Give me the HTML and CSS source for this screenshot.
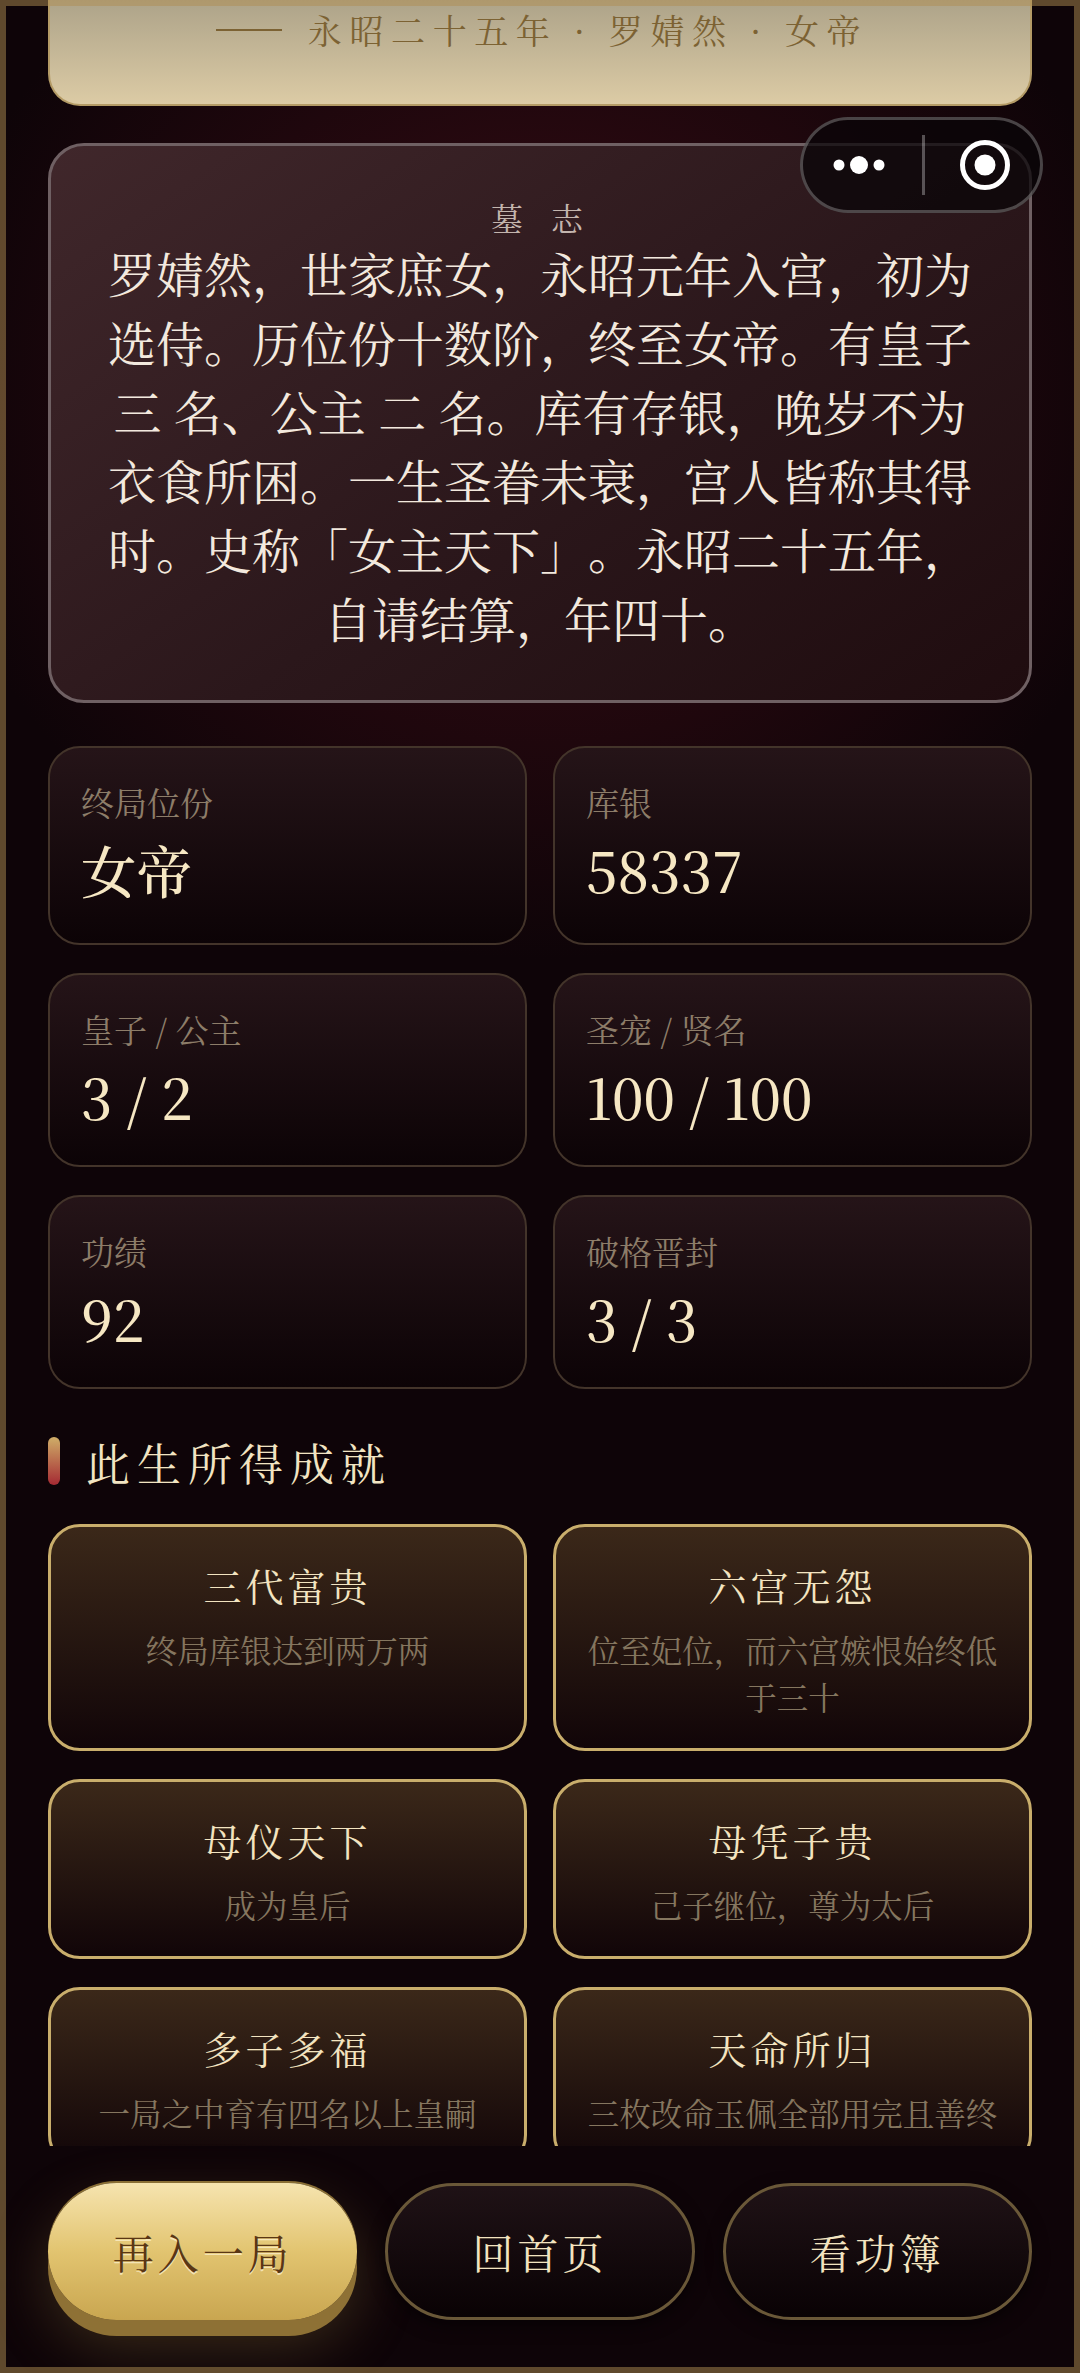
FILE: index.html
```html
<!DOCTYPE html>
<html lang="zh-CN">
<head>
    <meta charset="UTF-8">
    <meta name="viewport" content="width=device-width, initial-scale=1.0">
    <title>终局</title>
    <link rel="stylesheet" href="styles.css">
</head>
<body>
    <div class="frame">
        <div class="scroll">
            <div class="verdict">
                <p class="verdict-line"><span class="verdict-dash"></span>永昭二十五年 · 罗婧然 · 女帝</p>
            </div>

            <section class="epitaph">
                <h2 class="epitaph-title">墓志</h2>
                <p class="epitaph-text">罗婧然，世家庶女，永昭元年入宫，初为选侍。历位份十数阶，终至女帝。有皇子 三 名、公主 二 名。库有存银，晚岁不为衣食所困。一生圣眷未衰，宫人皆称其得时。史称「女主天下」。永昭二十五年，自请结算，年四十。</p>
            </section>

            <section class="stats">
                <div class="stat stat-tall">
                    <div class="stat-label">终局位份</div>
                    <div class="stat-value">女帝</div>
                </div>
                <div class="stat stat-tall">
                    <div class="stat-label">库银</div>
                    <div class="stat-value">58337</div>
                </div>
                <div class="stat">
                    <div class="stat-label">皇子 / 公主</div>
                    <div class="stat-value">3 / 2</div>
                </div>
                <div class="stat">
                    <div class="stat-label">圣宠 / 贤名</div>
                    <div class="stat-value">100 / 100</div>
                </div>
                <div class="stat">
                    <div class="stat-label">功绩</div>
                    <div class="stat-value">92</div>
                </div>
                <div class="stat">
                    <div class="stat-label">破格晋封</div>
                    <div class="stat-value">3 / 3</div>
                </div>
            </section>

            <h3 class="section-title"><span class="section-mark"></span>此生所得成就</h3>

            <section class="achievements">
                <div class="achievement">
                    <div class="achievement-name">三代富贵</div>
                    <div class="achievement-desc">终局库银达到两万两</div>
                </div>
                <div class="achievement">
                    <div class="achievement-name">六宫无怨</div>
                    <div class="achievement-desc">位至妃位，而六宫嫉恨始终低于三十</div>
                </div>
                <div class="achievement">
                    <div class="achievement-name">母仪天下</div>
                    <div class="achievement-desc">成为皇后</div>
                </div>
                <div class="achievement">
                    <div class="achievement-name">母凭子贵</div>
                    <div class="achievement-desc">己子继位，尊为太后</div>
                </div>
                <div class="achievement">
                    <div class="achievement-name">多子多福</div>
                    <div class="achievement-desc">一局之中育有四名以上皇嗣</div>
                </div>
                <div class="achievement">
                    <div class="achievement-name">天命所归</div>
                    <div class="achievement-desc">三枚改命玉佩全部用完且善终</div>
                </div>
            </section>
        </div>

        <div class="actions">
            <button class="btn btn-primary">再入一局</button>
            <button class="btn">回首页</button>
            <button class="btn">看功簿</button>
        </div>

        <div class="capsule">
            <svg class="capsule-dots" width="70" height="24" viewBox="0 0 70 24">
                <circle cx="10" cy="12" r="5.5" fill="#fff"/>
                <circle cx="30" cy="12" r="9" fill="#fff"/>
                <circle cx="50" cy="12" r="5.5" fill="#fff"/>
            </svg>
            <span class="capsule-line"></span>
            <svg class="capsule-ring" width="50" height="50" viewBox="0 0 50 50">
                <circle cx="25" cy="25" r="22.5" fill="none" stroke="#fff" stroke-width="5"/>
                <circle cx="25" cy="25" r="10.5" fill="#fff"/>
            </svg>
        </div>
    </div>
</body>
</html>
```

FILE: styles.css
```css
* {
    box-sizing: border-box;
}
html, body {
    margin: 0;
    padding: 0;
    height: 100%;
    background: #0e0408;
}
.frame {
    position: relative;
    display: flex;
    flex-direction: column;
    width: 1080px;
    height: 2373px;
    overflow: hidden;
    padding: 0 6px 6px;
    background:
        radial-gradient(ellipse 620px 560px at 50% 400px, #3a0c15 0%, rgba(58, 12, 21, 0) 100%),
        #0e0408;
    font-family: "Noto Serif CJK SC", "Liberation Serif", serif;
    color: #f4e6c4;
    text-spacing-trim: space-all;
}
/* gold edge lies over everything, so the top card shows through it */
.frame::after {
    content: "";
    position: absolute;
    inset: 0;
    border: 6px solid rgba(176, 142, 82, 0.5);
    pointer-events: none;
}
.scroll {
    height: 2146px;
    overflow: hidden;
    padding: 0 42px;
    flex: none;
}

/* top card, mostly scrolled away */
.verdict {
    height: 106px;
    padding: 8px 0 0 4px;
    border: 2px solid #b49b66;
    border-top: none;
    border-radius: 0 0 32px 32px;
    background: linear-gradient(180deg, #ada389 0%, #dccba5 100%);
    text-align: center;
}
.verdict-line {
    margin: 0;
    font-size: 34px;
    line-height: 44px;
    letter-spacing: 7.6px;
    color: #7c6233;
    display: flex;
    align-items: center;
    justify-content: center;
}
.verdict-dash {
    width: 66px;
    height: 2px;
    margin-right: 26px;
    background: #7c6233;
}

.epitaph {
    margin-top: 37px;
    height: 560px;
    padding: 50px 48px 0;
    border: 3px solid #6f6063;
    border-radius: 36px;
    background: linear-gradient(145deg, #40272b 0%, #2b171b 55%, #1f0c0f 100%);
    text-align: center;
}
.epitaph-title {
    margin: 0;
    font-size: 32px;
    font-weight: normal;
    line-height: 42px;
    letter-spacing: 28px;
    text-indent: 22px;
    color: #c4b5ae;
}
.epitaph-text {
    margin: 0;
    font-size: 48px;
    line-height: 69px;
    color: #f3e9de;
}

.stats {
    margin-top: 43px;
    display: grid;
    grid-template-columns: 479px 479px;
    column-gap: 26px;
    row-gap: 28px;
}
.stat {
    height: 194px;
    padding: 32px 31px 0;
    border: 2px solid #43342a;
    border-radius: 32px;
    background: linear-gradient(180deg, #251418 0%, #0c0306 100%);
}
.stat-tall {
    height: 199px;
}
.stat-label {
    font-size: 33px;
    line-height: 44px;
    color: #8d7d69;
}
.stat-value {
    margin-top: 10px;
    font-size: 55.5px;
    font-weight: 500;
    line-height: 70px;
    color: #f6e7c3;
}

.section-title {
    margin: 43px 0 0;
    display: flex;
    align-items: center;
    font-size: 44px;
    font-weight: normal;
    line-height: 60px;
    letter-spacing: 7px;
    color: #f2e4c2;
}
.section-mark {
    width: 12px;
    height: 48px;
    margin: 0 26px 2px 0;
    border-radius: 6px;
    background: linear-gradient(180deg, #cfae68 0%, #a52a33 100%);
}

.achievements {
    margin-top: 32px;
    display: grid;
    grid-template-columns: 479px 479px;
    column-gap: 26px;
    row-gap: 28px;
}
.achievement {
    padding: 32px 24px 28px;
    border: 3px solid #c9ae6c;
    border-radius: 32px;
    background: linear-gradient(180deg, #3b2819 0%, #110508 100%);
    text-align: center;
}
.achievement-name {
    font-size: 38px;
    line-height: 52px;
    letter-spacing: 4px;
    color: #f3e4c0;
}
.achievement-desc {
    margin-top: 15px;
    font-size: 31.5px;
    line-height: 47px;
    color: #85765f;
}

.actions {
    flex: 1;
    display: grid;
    grid-template-columns: repeat(3, 1fr);
    gap: 28px;
    padding: 37px 42px 0;
}
.btn {
    height: 137px;
    border: 3px solid #6a5838;
    border-radius: 69px;
    background: linear-gradient(180deg, #1f1216 0%, #090204 100%);
    font-family: inherit;
    font-size: 41px;
    letter-spacing: 4px;
    color: #f3e4c0;
    box-shadow: 0 6px 16px rgba(0, 0, 0, 0.5);
}
.btn-primary {
    border: none;
    background: linear-gradient(180deg, #f6e4af 0%, #e2c470 50%, #c9a650 100%);
    color: #5a3614;
    text-shadow: 0 2px 0 rgba(255, 245, 215, 0.7);
    box-shadow: 0 -2px 0 #8a6f35, 0 16px 0 #8e7135, 0 24px 60px rgba(201, 166, 80, 0.25);
}

/* mini program capsule sits over the page */
.capsule {
    position: absolute;
    top: 117px;
    left: 800px;
    width: 243px;
    height: 96px;
    display: flex;
    align-items: center;
    border: 3px solid rgba(255, 255, 255, 0.25);
    border-radius: 48px;
    background: rgba(10, 5, 8, 0.75);
}
.capsule-dots {
    margin-left: 26px;
}
.capsule-line {
    width: 3px;
    height: 60px;
    margin-left: 23px;
    background: rgba(255, 255, 255, 0.3);
}
.capsule-ring {
    margin-left: 35px;
}
```
